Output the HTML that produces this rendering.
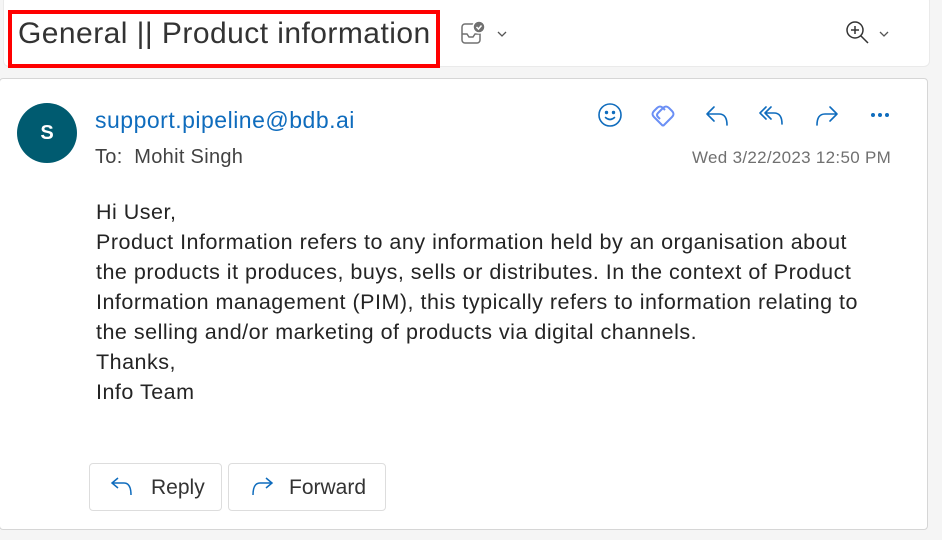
<!DOCTYPE html>
<html><head><style>
body{margin:0;width:942px;height:540px;background:#f5f5f5;font-family:"Liberation Sans",sans-serif;position:relative;overflow:hidden}
.hdr{position:absolute;left:3px;top:-5px;width:925px;height:70px;background:#fff;border-radius:6px;border:1px solid #eaeaea}
.red{position:absolute;left:8px;top:10px;width:424px;height:50px;border:4px solid #f00}
.title{position:absolute;left:18px;top:17px;font-size:30px;color:#333;letter-spacing:0.45px;white-space:nowrap}
.card{position:absolute;left:-1px;top:78px;width:927px;height:450px;background:#fff;border:1px solid #d6d6d6;border-radius:4px}
.av{position:absolute;left:17px;top:103px;width:60px;height:60px;border-radius:50%;background:#005b70;color:#fff;font-weight:bold;font-size:20px;text-align:center;line-height:60px}
.from{position:absolute;left:95px;top:107px;font-size:23px;letter-spacing:0.5px;color:#0f6cbd}
.to{position:absolute;left:95px;top:146px;font-size:20px;letter-spacing:0.3px;color:#424242}
.date{position:absolute;left:692px;top:148px;font-size:17px;letter-spacing:0.3px;color:#707070}
.body{position:absolute;left:96px;top:197px;font-size:21.5px;letter-spacing:0.5px;line-height:30px;color:#242424;white-space:nowrap}
.btn{position:absolute;top:463px;height:48px;border:1px solid #ddd;border-radius:4px;background:#fff;font-size:21px;color:#333;box-sizing:border-box;line-height:48px}
svg{position:absolute}
</style></head><body>
<div class="hdr"></div>
<div class="red"></div>
<div class="title">General || Product information</div>
<svg style="left:460px;top:20px" width="26" height="26" viewBox="0 0 26 26" fill="none" stroke="#707070" stroke-width="1.5"><rect x="2" y="4" width="18" height="19" rx="3"/><path d="M2 14h5l2 3h4l2-3h5"/><circle cx="19" cy="7" r="6" fill="#707070" stroke="#fff"/><path d="M16.5 7l2 2 3-3.5" stroke="#fff"/></svg>
<svg style="left:496px;top:30px" width="12" height="8" viewBox="0 0 12 8" fill="none" stroke="#555" stroke-width="1.3"><path d="M2 2l4 4 4-4"/></svg>
<svg style="left:845px;top:20px" width="26" height="26" viewBox="0 0 26 26" fill="none" stroke="#333" stroke-width="1.5"><circle cx="10" cy="10" r="8"/><path d="M16 16l7 7M10 6v8M6 10h8"/></svg>
<svg style="left:878px;top:30px" width="12" height="8" viewBox="0 0 12 8" fill="none" stroke="#555" stroke-width="1.3"><path d="M2 2l4 4 4-4"/></svg>
<div class="card"></div>
<div class="av">S</div>
<div class="from">support.pipeline@bdb.ai</div>
<div class="to">To:&nbsp; Mohit Singh</div>
<div class="date">Wed 3/22/2023 12:50 PM</div>
<svg style="left:597px;top:102px" width="26" height="26" viewBox="0 0 26 26" fill="none" stroke="#0f6cbd" stroke-width="1.6" stroke-linecap="round"><circle cx="13" cy="13" r="11"/><circle cx="9.5" cy="10.5" r=".9" fill="#0f6cbd"/><circle cx="16.5" cy="10.5" r=".9" fill="#0f6cbd"/><path d="M8.5 15.5q4.5 4 9 0"/></svg>
<svg style="left:650px;top:102px" width="26" height="26" viewBox="0 0 26 26" fill="none" stroke="#6b8ff5" stroke-width="2" stroke-linejoin="round"><path d="M13 24L4 15q-3-3 0-6l3-3q3-3 6 0l2 2"/><path d="M13 24l9-9q3-3 0-6l-3-3q-3-3-6 0l-5 5q-2 2 0 4l2 2"/></svg>
<svg style="left:705px;top:103px" width="26" height="24" viewBox="0 0 26 24" fill="none" stroke="#0f6cbd" stroke-width="1.6" stroke-linecap="round" stroke-linejoin="round"><path d="M9 4L2 11l7 7M2 11h12q8 0 8 11"/></svg>
<svg style="left:758px;top:103px" width="28" height="24" viewBox="0 0 28 24" fill="none" stroke="#0f6cbd" stroke-width="1.6" stroke-linecap="round" stroke-linejoin="round"><path d="M8 4L2 10l6 6M13 4L7 10l6 6M7 10h9q8 0 8 11"/></svg>
<svg style="left:813px;top:103px" width="26" height="24" viewBox="0 0 26 24" fill="none" stroke="#0f6cbd" stroke-width="1.6" stroke-linecap="round" stroke-linejoin="round"><path d="M17 4l7 7-7 7M24 11H12q-8 0-8 11"/></svg>
<svg style="left:870px;top:112px" width="24" height="6"><circle cx="3" cy="3" r="2" fill="#0f6cbd"/><circle cx="10" cy="3" r="2" fill="#0f6cbd"/><circle cx="17" cy="3" r="2" fill="#0f6cbd"/></svg>
<div class="body">Hi User,<br>Product Information refers to any information held by an organisation about<br>the products it produces, buys, sells or distributes. In the context of Product<br>Information management (PIM), this typically refers to information relating to<br>the selling and/or marketing of products via digital channels.<br>Thanks,<br>Info Team</div>
<div class="btn" style="left:89px;width:133px;padding-left:61px">Reply</div>
<svg style="left:110px;top:475px" width="26" height="24" viewBox="0 0 26 24" fill="none" stroke="#0f6cbd" stroke-width="1.5"><path d="M8 3l-6 5 6 5M2 8h12q7 0 7 12"/></svg>
<div class="btn" style="left:228px;width:158px;padding-left:60px">Forward</div>
<svg style="left:248px;top:475px" width="26" height="24" viewBox="0 0 26 24" fill="none" stroke="#0f6cbd" stroke-width="1.5"><path d="M18 3l6 5-6 5M24 8h-12q-7 0-7 12"/></svg>
</body></html>
